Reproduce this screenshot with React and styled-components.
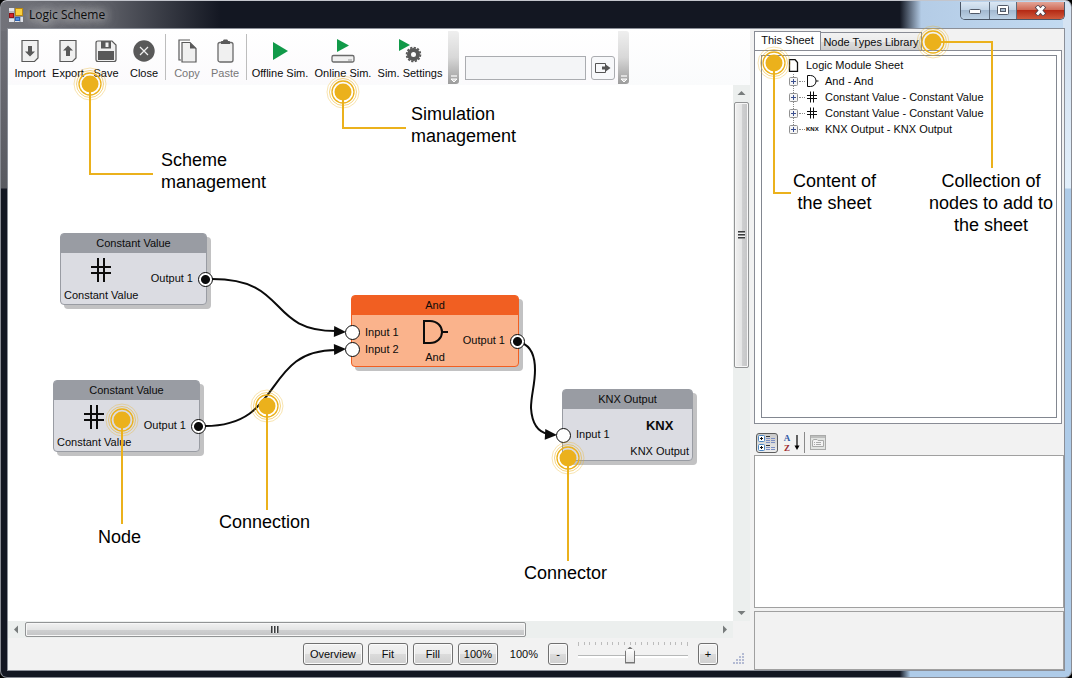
import React from "react";
import styled, { createGlobalStyle } from "styled-components";

const nodes = [
  {
    id: "const1",
    title: "Constant Value",
    icon: "hash",
    x: 52,
    y: 148,
    width: 147,
    outputs: ["Output 1"],
  },
  {
    id: "const2",
    title: "Constant Value",
    icon: "hash",
    x: 45,
    y: 295,
    width: 147,
    outputs: ["Output 1"],
  },
  {
    id: "and",
    title: "And",
    icon: "and",
    x: 343,
    y: 210,
    width: 168,
    inputs: ["Input 1", "Input 2"],
    outputs: ["Output 1"],
    active: true,
  },
  {
    id: "knx",
    title: "KNX Output",
    icon: "knx",
    x: 554,
    y: 304,
    width: 131,
    inputs: ["Input 1"],
  },
];

const wires = [
  "M204 194 C282 194 258 246 328 246",
  "M197 341 C277 341 254 265 328 265",
  "M514 258 C524 262 527 273 527 285 C527 300 523 310 523 323 C524 339 530 347 540 349",
];

const arrows = [
  { x: 338, y: 247, angle: 2 },
  { x: 338, y: 264, angle: -2 },
  { x: 549, y: 350, angle: 3 },
];

const tree = [
  { icon: "and", text: "And - And" },
  { icon: "hash", text: "Constant Value - Constant Value" },
  { icon: "hash", text: "Constant Value - Constant Value" },
  { icon: "knx", text: "KNX Output - KNX Output" },
];

const App = () => {
  return (
    <Window>
      <GlobalStyles />
      <TitleBar>
        <AppIcon />
        <Title>Logic Scheme</Title>
        <WindowButtons>
          <WindowButton $width={29} aria-label="Minimize">
            <svg width="14" height="8" viewBox="0 0 14 8">
              <rect x="1.5" y="2.5" width="11" height="4" rx="1" fill="#fff" stroke="#525a68" />
            </svg>
          </WindowButton>
          <WindowButton $width={27} aria-label="Maximize">
            <svg width="12" height="11" viewBox="0 0 12 11">
              <rect x="0.5" y="0.5" width="11" height="9" rx="1" fill="#fff" stroke="#525a68" />
              <rect x="3.5" y="3.5" width="5" height="3" fill="#a9bccf" stroke="#525a68" />
            </svg>
          </WindowButton>
          <WindowButton $width={47} $danger aria-label="Close window">
            <svg width="13" height="11" viewBox="0 0 13 11">
              <path d="M2.5 1l8 9M10.5 1l-8 9" stroke="#51424c" strokeWidth="4.6" />
              <path d="M3 1.5l7 8M10 1.5l-7 8" stroke="#fff" strokeWidth="2.8" />
            </svg>
          </WindowButton>
        </WindowButtons>
      </TitleBar>

      <Client>
        <MainColumn>
          <Toolbar />
          <Workspace>
            <Sheet />
            <Scrollbar $vertical>
              <ScrollArrow direction="up" />
              <Track $vertical>
                <Thumb $vertical $size="53%">
                  <Gripper $vertical />
                </Thumb>
              </Track>
              <ScrollArrow direction="down" />
            </Scrollbar>
          </Workspace>
          <ScrollRow>
            <Scrollbar>
              <ScrollArrow direction="left" />
              <Track>
                <Thumb $size="72.5%">
                  <Gripper />
                </Thumb>
              </Track>
              <ScrollArrow direction="right" />
            </Scrollbar>
          </ScrollRow>
          <StatusBar>
            <FlatButton $width={60}>Overview</FlatButton>
            <FlatButton $width={40}>Fit</FlatButton>
            <FlatButton $width={40}>Fill</FlatButton>
            <FlatButton $width={40}>100%</FlatButton>
            <ZoomValue htmlFor="zoom">100%</ZoomValue>
            <FlatButton $width={20} aria-label="Zoom out">
              -
            </FlatButton>
            <ZoomSlider>
              <Ticks>
                {Array.from({ length: 20 }, (_, i) => (
                  <Tick key={i} $end={i === 0 || i === 19} />
                ))}
              </Ticks>
              <Range id="zoom" type="range" min="0" max="100" defaultValue="47" />
            </ZoomSlider>
            <FlatButton $width={20} aria-label="Zoom in">
              +
            </FlatButton>
            <SizeGrip />
          </StatusBar>
        </MainColumn>
        <SidePanel />
      </Client>
    </Window>
  );
};

const Toolbar = () => (
  <ToolStrips>
    <ToolStrip>
      <ToolButton $width={38}>
        <ImportIcon />
        Import
      </ToolButton>
      <ToolButton $width={38}>
        <ImportIcon up />
        Export
      </ToolButton>
      <ToolButton $width={38}>
        <SaveIcon />
        Save
      </ToolButton>
      <ToolButton $width={38}>
        <CloseIcon />
        Close
      </ToolButton>
      <Separator />
      <ToolButton $width={38} disabled>
        <CopyIcon />
        Copy
      </ToolButton>
      <ToolButton $width={38} disabled>
        <PasteIcon />
        Paste
      </ToolButton>
      <Separator />
      <ToolButton $width={62}>
        <PlayIcon />
        Offline Sim.
      </ToolButton>
      <ToolButton $width={64}>
        <OnlineIcon />
        Online Sim.
      </ToolButton>
      <ToolButton $width={70}>
        <SimSettingsIcon />
        Sim. Settings
      </ToolButton>
      <Overflow />
    </ToolStrip>
    <ToolStrip>
      <SearchBox type="text" aria-label="Search" />
      <GoButton aria-label="Go">
        <svg width="16" height="12" viewBox="0 0 16 12">
          <path d="M10.5 3V1.5H0.5V10.5H10.5V9" fill="none" stroke="#555" />
          <path d="M7 4.5H10V2L15.5 6L10 10V7.5H7Z" fill="#555" />
        </svg>
      </GoButton>
      <Overflow />
    </ToolStrip>
  </ToolStrips>
);

const Overflow = () => (
  <OverflowButton aria-label="Toolbar options">
    <svg width="8" height="8" viewBox="0 0 8 8">
      <path d="M1 1h6" stroke="#fff" strokeWidth="1.2" />
      <path d="M1 4l3 3 3-3z" fill="#fff" fillOpacity="0.5" stroke="#fff" />
    </svg>
  </OverflowButton>
);

const Sheet = () => (
  <Canvas>
    {nodes.map((node) => (
      <LogicNode key={node.id} {...node} />
    ))}
    <Wires>
      {wires.map((d) => (
        <path key={d} d={d} fill="none" stroke="#0b0b0b" strokeWidth="2" />
      ))}
      {arrows.map(({ x, y, angle }) => (
        <path
          key={`${x}-${y}`}
          d="M0 0L-12 -5.5V5.5Z"
          transform={`translate(${x} ${y}) rotate(${angle})`}
          fill="#0b0b0b"
        />
      ))}
    </Wires>
    {nodes.map(({ id, x, y, width, inputs = [], outputs = [] }) => (
      <Connectors key={id} $x={x} $y={y} $width={width}>
        <Pins>
          {inputs.map((name) => (
            <Pin key={name} />
          ))}
        </Pins>
        <Pins>
          {outputs.map((name) => (
            <Pin key={name} $filled />
          ))}
        </Pins>
      </Connectors>
    ))}

    <Callout x={82} y={-1} line="V90H63" labelX={71} labelY={65}>
      Scheme
      <br />
      management
    </Callout>
    <Callout x={335} y={7} line="V36H63" labelX={68} labelY={11}>
      Simulation
      <br />
      management
    </Callout>
    <Callout x={114} y={335} line="V104" labelX={-24} labelY={106}>
      Node
    </Callout>
    <Callout x={259} y={321} line="V104" labelX={-48} labelY={105}>
      Connection
    </Callout>
    <Callout x={560} y={373} line="V103" labelX={-44} labelY={104}>
      Connector
    </Callout>
  </Canvas>
);

const LogicNode = ({ title, icon, x, y, width, inputs, outputs, active }) => (
  <NodeBox $x={x} $y={y} $width={width} $active={active}>
    <NodeTitle $active={active}>{title}</NodeTitle>
    <NodeBody $columns={[inputs && "1fr", "auto", outputs && "1fr"].filter(Boolean).join(" ")}>
      {inputs && (
        <Ports>
          {inputs.map((name) => (
            <li key={name}>{name}</li>
          ))}
        </Ports>
      )}
      <NodeCaption>
        <Glyph>
          <TypeIcon name={icon} />
        </Glyph>
        {title}
      </NodeCaption>
      {outputs && (
        <Ports $right>
          {outputs.map((name) => (
            <li key={name}>{name}</li>
          ))}
        </Ports>
      )}
    </NodeBody>
  </NodeBox>
);

const TypeIcon = ({ name, small }) => {
  if (name === "hash" && small) {
    return (
      <svg width="12" height="12" viewBox="0 0 12 12">
        <path d="M4.5 0.500V11.500M7.500 0.500V11.500M1 4.500H11M1 7.500H11" stroke="#0b0b0b" />
      </svg>
    );
  }
  if (name === "hash") {
    return (
      <svg width="22" height="24" viewBox="0 0 22 24">
        <path d="M8 0V24M14 0V24M1 9H21M1 15H21" stroke="#0b0b0b" strokeWidth="2" />
      </svg>
    );
  }
  if (name === "and" && small) {
    return (
      <svg width="13" height="12" viewBox="0 0 13 12">
        <path
          d="M1.500 0.500H4.500C8 0.500 10 3 10 6S8 11.500 4.500 11.500H1.500ZM10 6H12.500"
          fill="none"
          stroke="#0b0b0b"
        />
      </svg>
    );
  }
  if (name === "and") {
    return (
      <svg width="26" height="26" viewBox="0 0 26 26">
        <path
          d="M2 2H8C15 2 20 7 20 13S15 24 8 24H2ZM20 13H26"
          fill="none"
          stroke="#0b0b0b"
          strokeWidth="2"
        />
      </svg>
    );
  }
  return <KnxMark $small={small}>KNX</KnxMark>;
};

const Callout = ({ x, y, line, labelX, labelY, align, children }) => (
  <CalloutAnchor $x={x} $y={y}>
    <CalloutDrawing width="1" height="1">
      <path d={`M0 0${line}`} fill="none" stroke="#ebb11c" strokeWidth="2" />
      <circle r="8.5" fill="#ebb11c" />
      <g fill="none" stroke="#ebb11c">
        <circle r="11" strokeWidth="1.3" />
        <circle r="13.5" strokeOpacity="0.55" />
        <circle r="16" strokeOpacity="0.35" />
      </g>
    </CalloutDrawing>
    <CalloutLabel $x={labelX} $y={labelY} $align={align}>
      {children}
    </CalloutLabel>
  </CalloutAnchor>
);

const SidePanel = () => (
  <Side>
    <TabControl>
      <Tabs role="tablist">
        <Tab role="tab" aria-selected="true" $selected>
          This Sheet
        </Tab>
        <Tab role="tab" aria-selected="false">
          Node Types Library
        </Tab>
      </Tabs>
      <TabPage>
        <TreeBox>
          <TreeRoot>
            <svg width="11" height="13" viewBox="0 0 11 13">
              <path d="M1.5 0.5H7L9.5 3.5V12.5H1.5Z" fill="#fff" stroke="#111" strokeWidth="1.3" />
            </svg>
            Logic Module Sheet
          </TreeRoot>
          <TreeList>
            {tree.map(({ icon, text }, i) => (
              <TreeItem key={i} $last={i === tree.length - 1}>
                <Expander aria-label={`Expand ${text}`}>
                  <svg width="9" height="9" viewBox="0 0 9 9">
                    <rect x="0.5" y="0.5" width="8" height="8" rx="1" fill="#f5f5f5" stroke="#919191" />
                    <path d="M2 4.5H7M4.5 2V7" stroke="#3b4f8f" />
                  </svg>
                </Expander>
                <Dots />
                <TreeIcon>
                  <TypeIcon name={icon} small />
                </TreeIcon>
                {text}
              </TreeItem>
            ))}
          </TreeList>
        </TreeBox>
      </TabPage>
    </TabControl>

    <PropertyBar>
      <PropertyButton $pressed aria-label="Categorized">
        <svg width="18" height="16" viewBox="0 0 18 16">
          <g fill="#fff" stroke="#4b86c4">
            <rect x="0.5" y="0.5" width="6" height="6" rx="1" />
            <rect x="0.5" y="9.5" width="6" height="6" rx="1" />
          </g>
          <path d="M2 3.5H5M3.5 2V5M2 12.5H5M3.5 11V14" stroke="#111" />
          <path d="M8 1.5H12M8 10.5H12" stroke="#333" />
          <path
            d="M8 3.5H12M13 3.5H17M8 5.5H12M13 5.5H17M8 7.5H12M13 7.5H17M8 12.5H12M13 12.5H17M8 14.5H12M13 14.5H17"
            stroke="#7c8fc4"
          />
        </svg>
      </PropertyButton>
      <PropertyButton aria-label="Alphabetical">
        <Letters>
          <span>A</span>
          <span>Z</span>
        </Letters>
        <svg width="6" height="17" viewBox="0 0 6 17">
          <path d="M3 1V14" stroke="#000" strokeWidth="1.2" />
          <path d="M0.5 11.5H5.5L3 16Z" />
        </svg>
      </PropertyButton>
      <PropertySeparator />
      <PropertyButton disabled aria-label="Property pages">
        <svg width="16" height="15" viewBox="0 0 16 15">
          <rect x="0.5" y="0.5" width="15" height="14" fill="#e2e4e2" stroke="#a9aaa9" />
          <path d="M1 2H15" stroke="#bdbebd" strokeWidth="2" />
          <path d="M2.5 11.5V5.5L4 4.5H7L8 5.5H13.5V11.5Z" fill="#f3f3f3" stroke="#a9aaa9" />
          <path d="M4 7.5H5M6 7.5H11M4 9.5H5M6 9.5H11" stroke="#a9aaa9" />
        </svg>
      </PropertyButton>
    </PropertyBar>
    <PropertyGrid />
    <PropertyHelp />

    <Callout x={20} y={34} line="V130H17" labelX={19} labelY={107} align="center">
      Content of
      <br />
      the sheet
    </Callout>
    <Callout x={179} y={13} line="H59V126" labelX={-4} labelY={128} align="center">
      Collection of
      <br />
      nodes to add to
      <br />
      the sheet
    </Callout>
  </Side>
);

const AppIcon = () => (
  <svg width="14" height="14" viewBox="0 0 14 14">
    <rect width="14" height="14" fill="#dfe2e8" />
    <path d="M0 4H6M5.5 0V14M5.5 8.5H14M11 8.5V14M0 10H6" stroke="#8a8d96" fill="none" />
    <rect x="6.5" y="0.5" width="7" height="7" fill="#fbd13c" stroke="#b98710" />
    <rect x="0.5" y="5.5" width="4" height="4" fill="#d5262c" stroke="#8d1418" />
    <rect x="6.5" y="9.5" width="4" height="3" fill="#4e8be0" stroke="#2a5fb0" />
  </svg>
);

const ImportIcon = ({ up }) => (
  <svg width="18" height="24" viewBox="0 0 18 24">
    <path d="M1 1.500H17V19L13.500 22.500H1Z" fill="#f0f0f0" stroke="#595959" strokeWidth="1.200" />
    <path
      d={up ? "M7 17V11.500H4L9 6.500L14 11.500H11V17Z" : "M7 7V12.500H4L9 17.500L14 12.500H11V7Z"}
      fill="#595959"
    />
  </svg>
);

const SaveIcon = () => (
  <svg width="22" height="24" viewBox="0 0 22 24">
    <path
      d="M1 4Q1 2 3 2H17L21 6V20.500Q21 22.500 19 22.500H3Q1 22.500 1 20.500Z"
      fill="#f0f0f0"
      stroke="#595959"
      strokeWidth="1.200"
    />
    <path d="M6 2H16V9.500H6Z" fill="#595959" />
    <path d="M10.500 3.500H13.500V8H10.500Z" fill="#f0f0f0" />
    <path d="M3 12H19V21H3Z" fill="#595959" />
  </svg>
);

const CloseIcon = () => (
  <svg width="22" height="24" viewBox="0 0 22 24">
    <circle cx="11" cy="12" r="10.7" fill="#595959" />
    <path d="M7 8L15 16M15 8L7 16" stroke="#f0f0f0" strokeWidth="1.2" />
  </svg>
);

const CopyIcon = () => (
  <svg width="19" height="24" viewBox="0 0 19 24">
    <path d="M3 21H1V1H12" fill="none" stroke="#595959" strokeWidth="1.2" />
    <path d="M4 3.500H12L18 9.500V23H4Z" fill="#f0f0f0" stroke="#595959" strokeWidth="1.2" />
    <path d="M12 3.500L18 9.500H12Z" fill="#595959" />
  </svg>
);

const PasteIcon = () => (
  <svg width="17" height="24" viewBox="0 0 17 24">
    <rect x="1" y="3.5" width="15" height="19.5" rx="2" fill="#f0f0f0" stroke="#6a6a6a" strokeWidth="1.3" />
    <path d="M4 5V2.5Q4 2 5 2H6Q6 0.5 7 0.5H10Q11 0.5 11 2H12Q13 2 13 2.5V5Z" fill="#595959" />
  </svg>
);

const PlayIcon = () => (
  <svg width="17" height="24" viewBox="0 0 17 24">
    <path d="M1 3V21L16 12Z" fill="#119a49" />
  </svg>
);

const OnlineIcon = () => (
  <svg width="24" height="24" viewBox="0 0 24 24">
    <path d="M6 0V13L18 6.5Z" fill="#119a49" />
    <rect x="1" y="16.5" width="22" height="6.5" rx="1.5" fill="#f0f0f0" stroke="#6a6a6a" strokeWidth="1.3" />
    <path d="M17 21H21" stroke="#9a9a9a" />
  </svg>
);

const SimSettingsIcon = () => (
  <svg width="24" height="24" viewBox="0 0 24 24">
    <path d="M1 0V12L12 6Z" fill="#119a49" />
    <circle cx="15.5" cy="15.5" r="4.5" fill="none" stroke="#595959" strokeWidth="4" />
    <circle
      cx="15.5"
      cy="15.5"
      r="6.9"
      fill="none"
      stroke="#595959"
      strokeWidth="1.8"
      strokeDasharray="2.2 1.413"
    />
  </svg>
);

const arrowPaths = {
  up: "M4.5 2L8.5 6H0.5Z",
  down: "M0.5 3H8.5L4.5 7Z",
  left: "M2 4.5L6 0.5V8.5Z",
  right: "M3 0.5V8.5L7 4.5Z",
};

const ScrollArrow = ({ direction }) => (
  <ArrowButton aria-label={`Scroll ${direction}`}>
    <svg width="9" height="9" viewBox="0 0 9 9">
      <path d={arrowPaths[direction]} fill="#777c7c" />
    </svg>
  </ArrowButton>
);

const SizeGrip = () => (
  <GripSvg width="11" height="11" viewBox="0 0 11 11">
    {[0, 1, 2, 3].map((row) =>
      [0, 1, 2, 3]
        .filter((col) => col + row >= 3)
        .map((col) => (
          <rect key={`${row}-${col}`} x={col * 3} y={row * 3} width="2" height="2" fill="#b4bbd3" />
        ))
    )}
  </GripSvg>
);

const GlobalStyles = createGlobalStyle`
  *, *::before, *::after {
    box-sizing: border-box;
  }
  body {
    margin: 0;
    background: #000;
    color: #0b0b0b;
    font-family: "Liberation Sans", Arial, sans-serif;
    font-size: 11px;
    line-height: 14px;
  }
  button, input {
    margin: 0;
    padding: 0;
    color: inherit;
    font: inherit;
  }
  svg {
    display: block;
    flex-shrink: 0;
  }
  ul {
    margin: 0;
    padding: 0;
    list-style: none;
  }
`;

const Window = styled.div`
  display: flex;
  flex-direction: column;
  min-height: 100vh;
  padding: 1px 6px 6px;
  border: 1px solid #888b93;
  border-top-color: #c3c5cc;
  border-radius: 7px;
  background:
    linear-gradient(#d5e3f2, #d5e3f2 60px, #e2effb 187px, #aecbe8 188px) right / 8px 100% no-repeat,
    linear-gradient(90deg, transparent 84%, #aecbe8 85%) bottom / 100% 8px no-repeat,
    linear-gradient(90deg, transparent 84%, #b4cce6 86%, #c3dbf2) top / 100% 30px no-repeat,
    linear-gradient(90deg, #72737a 0, #5a5c64 110px, #131722 220px) top / 100% 30px no-repeat,
    linear-gradient(#72737a, #595a61 187px, #131722 188px) left / 8px 100% no-repeat,
    #131722;
`;

const TitleBar = styled.header`
  display: flex;
  align-items: center;
  gap: 6px;
  height: 26px;
  padding-left: 2px;
`;

const Title = styled.h1`
  margin: 0;
  font-family: "Open Sans", "Segoe UI", sans-serif;
  font-size: 12px;
  font-weight: 400;
  line-height: 16px;
  text-shadow: 0 0 8px #ddd, 0 0 12px #ccc, 0 0 18px #bbb;
`;

const WindowButtons = styled.div`
  display: flex;
  align-self: flex-start;
  margin-left: auto;
  border: 1px solid #4a5666;
  border-top: 0;
  border-radius: 0 0 5px 5px;
  overflow: hidden;
`;

const WindowButton = styled.button`
  display: flex;
  align-items: center;
  justify-content: center;
  width: ${({ $width }) => $width}px;
  height: 17px;
  border: 0;
  border-right: ${({ $danger }) => ($danger ? 0 : "1px solid #5d6b7c")};
  background: ${({ $danger }) =>
    $danger
      ? "linear-gradient(#e3a598, #cf6b57 45%, #b52a15 50%, #cf5a3c)"
      : "linear-gradient(#dbe7f3, #c3d5e7 45%, #a3b9d0 50%, #bdd2e6)"};
`;

const Client = styled.main`
  display: flex;
  flex: 1;
  border: 1px solid #8b8f98;
  background: #f2f2f2;
`;

const MainColumn = styled.section`
  display: flex;
  flex-direction: column;
  flex: 1;
  min-width: 0;
`;

const ToolStrips = styled.div`
  display: flex;
  align-items: flex-end;
  gap: 3px;
  height: 56px;
  padding: 1px 0 1px 3px;
  background: linear-gradient(#fff, #fafbfc);
`;

const ToolStrip = styled.div`
  display: flex;
  align-items: flex-end;
  background: linear-gradient(#fff, #fbfafc);
`;

const ToolButton = styled.button`
  display: flex;
  flex-direction: column;
  align-items: center;
  justify-content: flex-end;
  gap: 3px;
  width: ${({ $width }) => $width}px;
  height: 53px;
  padding-bottom: 4px;
  border: 0;
  background: none;
  white-space: nowrap;

  &:disabled {
    color: #777;
  }
`;

const Separator = styled.div`
  width: 1px;
  height: 46px;
  margin: 0 2px 4px;
  background: #bdbdbd;
`;

const OverflowButton = styled.button`
  display: flex;
  align-items: flex-end;
  justify-content: center;
  width: 11px;
  height: 53px;
  margin-left: 3px;
  padding-bottom: 1px;
  border: 0;
  border-radius: 0 3px 3px 0;
  background: linear-gradient(#efefef, #d8d8d8 50%, #9c9c9c);
`;

const SearchBox = styled.input`
  width: 121px;
  height: 24px;
  margin: 0 5px 4px 3px;
  padding: 0 4px;
  border: 1px solid #aaacb0;
  background: #f4f5f7;
`;

const GoButton = styled.button`
  display: flex;
  align-items: center;
  justify-content: center;
  width: 24px;
  height: 24px;
  margin-bottom: 4px;
  border: 1px solid #aaacb0;
  border-radius: 3px;
  background: #f7f8fa;
`;

const Workspace = styled.div`
  display: flex;
  flex: 1;
`;

const Canvas = styled.div`
  position: relative;
  z-index: 1;
  flex: 1;
  background: #fff;
`;

const NodeBox = styled.article`
  position: absolute;
  left: ${({ $x }) => $x}px;
  top: ${({ $y }) => $y}px;
  width: ${({ $width }) => $width}px;
  height: 72px;
  border: 1px solid ${({ $active }) => ($active ? "#f15f22" : "#999ca3")};
  border-radius: 4px;
  background: ${({ $active }) => ($active ? "#fab38c" : "#dbdce2")};
  box-shadow: 4px 4px 0 #c2c2c3;
`;

const NodeTitle = styled.h2`
  height: 19px;
  margin: 0;
  background: ${({ $active }) => ($active ? "#f15f22" : "#999ca3")};
  border-radius: 2px 2px 0 0;
  font-size: 11px;
  font-weight: 400;
  line-height: 18px;
  text-align: center;
`;

const NodeBody = styled.div`
  display: grid;
  grid-template-columns: ${({ $columns }) => $columns};
  height: 51px;
  padding: 0 3px;
`;

const Ports = styled.ul`
  align-self: center;
  padding: 0 10px;
  line-height: 17px;
  text-align: ${({ $right }) => ($right ? "right" : "left")};
  white-space: nowrap;
`;

const NodeCaption = styled.div`
  display: flex;
  flex-direction: column;
  align-items: center;
  padding-top: 4px;
`;

const Glyph = styled.div`
  display: flex;
  align-items: center;
  height: 26px;
  margin-bottom: 5px;
`;

const KnxMark = styled.span`
  width: ${({ $small }) => ($small ? "14px" : "auto")};
  font-size: ${({ $small }) => ($small ? 6 : 13)}px;
  font-weight: 700;
`;

const Wires = styled.svg`
  position: absolute;
  inset: 0;
  width: 100%;
  height: 100%;
`;

const Connectors = styled.div`
  position: absolute;
  left: ${({ $x }) => $x - 6}px;
  top: ${({ $y }) => $y + 20}px;
  display: flex;
  justify-content: space-between;
  align-items: center;
  width: ${({ $width }) => $width + 12}px;
  height: 52px;
`;

const Pins = styled.div`
  display: flex;
  flex-direction: column;
  gap: 2px;
`;

const Pin = styled.span`
  width: 15px;
  height: 15px;
  border: 1px solid #0b0b0b;
  border-radius: 50%;
  background: ${({ $filled }) =>
    $filled ? "radial-gradient(circle, #0b0b0b 4px, #fff 5px)" : "#fff"};
`;

const CalloutAnchor = styled.div`
  position: absolute;
  left: ${({ $x }) => $x}px;
  top: ${({ $y }) => $y}px;
  z-index: 2;
`;

const CalloutDrawing = styled.svg`
  overflow: visible;
`;

const CalloutLabel = styled.p`
  position: absolute;
  left: ${({ $x }) => $x}px;
  top: ${({ $y }) => $y}px;
  margin: 0;
  color: #000;
  font-size: 18px;
  line-height: 22px;
  text-align: ${({ $align }) => $align || "left"};
  white-space: nowrap;
`;

const ScrollRow = styled.div`
  display: flex;
  padding-right: 17px;
`;

const Scrollbar = styled.div`
  display: flex;
  flex-direction: ${({ $vertical }) => ($vertical ? "column" : "row")};
  flex: ${({ $vertical }) => ($vertical ? "none" : 1)};
  width: ${({ $vertical }) => ($vertical ? "17px" : "auto")};
  height: ${({ $vertical }) => ($vertical ? "auto" : "17px")};
  background: #ecefee;
`;

const ArrowButton = styled.button`
  display: flex;
  align-items: center;
  justify-content: center;
  width: 17px;
  height: 17px;
  border: 0;
  background: none;
`;

const Track = styled.div`
  display: flex;
  flex-direction: inherit;
  flex: 1;
  padding: ${({ $vertical }) => ($vertical ? "0 1px" : "1px 0")};
`;

const Thumb = styled.div`
  display: flex;
  align-items: center;
  justify-content: center;
  flex: 0 0 ${({ $size }) => $size};
  border: 1px solid #929495;
  border-radius: 2px;
  box-shadow: inset 0 0 0 1px #f7f7f7;
  background: linear-gradient(
    ${({ $vertical }) => ($vertical ? "90deg" : "180deg")},
    #f1f1f1,
    #e4e5e5 50%,
    #cfd0d1 52%,
    #c4c5c6
  );
`;

const Gripper = styled.span`
  width: ${({ $vertical }) => ($vertical ? 7 : 8)}px;
  height: ${({ $vertical }) => ($vertical ? 8 : 7)}px;
  background: repeating-linear-gradient(
    ${({ $vertical }) => ($vertical ? "180deg" : "90deg")},
    #3a3c3d 0 1px,
    #8d8f90 1px 2px,
    #f1f1f1 2px 3px
  );
`;

const StatusBar = styled.footer`
  display: flex;
  align-items: center;
  justify-content: flex-end;
  gap: 5px;
  height: 32px;
  padding-right: 6px;
`;

const FlatButton = styled.button`
  width: ${({ $width }) => $width}px;
  height: 22px;
  border: 1px solid #707070;
  border-radius: 3px;
  box-shadow: inset 0 0 0 1px #fbfbfb;
  background: linear-gradient(#f2f2f2, #ebebeb 50%, #dbdbdb 52%, #cfcfcf);
`;

const ZoomValue = styled.label`
  padding: 0 5px 0 7px;
`;

const ZoomSlider = styled.div`
  display: flex;
  flex-direction: column;
  width: 110px;
  height: 24px;
  margin: 0 5px;
`;

const Ticks = styled.div`
  display: flex;
  justify-content: space-between;
  height: 4px;
`;

const Tick = styled.span`
  width: 1px;
  height: ${({ $end }) => ($end ? 4 : 3)}px;
  background: #bcbcbc;
`;

const Range = styled.input`
  appearance: none;
  width: 100%;
  height: 18px;
  background: linear-gradient(#b6b8b8, #b6b8b8) 0 9px / 100% 1px no-repeat,
    linear-gradient(#fff, #fff) 0 10px / 100% 2px no-repeat;

  &::-webkit-slider-thumb {
    appearance: none;
    width: 10px;
    height: 17px;
    border: 0;
    clip-path: polygon(50% 0, 100% 28%, 100% 100%, 0 100%, 0 28%);
    background: linear-gradient(#fff, #e4e4e4) center / 8px 13px no-repeat, #777;
  }
`;

const GripSvg = styled.svg`
  align-self: flex-end;
  margin: 0 0 6px 10px;
`;

const Side = styled.aside`
  position: relative;
  z-index: 2;
  display: flex;
  flex-direction: column;
  flex: 0 0 310px;
  margin-left: 4px;
  padding-top: 1px;
`;

const TabControl = styled.div`
  display: flex;
  flex-direction: column;
  flex: 1;
  margin-right: 2px;
`;

const Tabs = styled.div`
  display: flex;
  align-items: flex-end;
  height: 20px;
`;

const Tab = styled.button`
  width: ${({ $selected }) => ($selected ? 67 : 101)}px;
  height: ${({ $selected }) => ($selected ? 20 : 18)}px;
  margin-bottom: ${({ $selected }) => ($selected ? "-1px" : 0)};
  padding-bottom: ${({ $selected }) => ($selected ? 4 : 0)}px;
  border: 1px solid #898c95;
  border-width: ${({ $selected }) => ($selected ? "1px 1px 0" : "1px 1px 0 0")};
  background: ${({ $selected }) =>
    $selected ? "#fff" : "linear-gradient(#f2f2f2, #ebebeb 50%, #dddddd 52%, #cdcdcd)"};
  white-space: nowrap;
`;

const TabPage = styled.div`
  display: flex;
  flex: 1;
  padding: 4px 4px 5px 6px;
  border: 1px solid #898c95;
  background: #fff;
`;

const TreeBox = styled.div`
  flex: 1;
  padding: 1px 0 0 26px;
  border: 1px solid #828790;
`;

const TreeRoot = styled.div`
  display: flex;
  align-items: center;
  gap: 7px;
  height: 16px;
`;

const TreeList = styled.ul`
  padding-left: 1px;
`;

const TreeItem = styled.li`
  display: flex;
  align-items: center;
  height: 16px;
  background: linear-gradient(#fff 50%, transparent 50%) 4px 0 / 1px 2px repeat-y,
    linear-gradient(#888, #888) 4px 0 / 1px ${({ $last }) => ($last ? "50%" : "100%")} no-repeat;
`;

const Expander = styled.button`
  width: 9px;
  height: 9px;
  border: 0;
  background: none;
`;

const Dots = styled.span`
  width: 6px;
  margin-left: 1px;
  border-top: 1px dotted #888;
`;

const TreeIcon = styled.span`
  display: flex;
  align-items: center;
  width: 20px;
  padding-left: 1px;
`;

const PropertyBar = styled.div`
  display: flex;
  align-items: center;
  gap: 2px;
  height: 31px;
  padding: 6px 2px 0;
`;

const PropertyButton = styled.button`
  display: flex;
  align-items: center;
  justify-content: center;
  gap: 2px;
  width: 22px;
  height: 20px;
  border: ${({ $pressed }) => ($pressed ? "1px solid #5d5d5d" : 0)};
  border-radius: 3px;
  background: ${({ $pressed }) => ($pressed ? "linear-gradient(#c9c9c9, #ececec)" : "none")};
`;

const Letters = styled.span`
  display: flex;
  flex-direction: column;
  width: 9px;
  font-family: "Liberation Serif", "Times New Roman", serif;
  font-size: 9px;
  font-weight: 700;
  line-height: 10px;

  span:first-child {
    color: #3159a6;
  }
  span:last-child {
    color: #9c2a2f;
  }
`;

const PropertySeparator = styled.div`
  width: 1px;
  height: 21px;
  background: #8a8a8a;
`;

const PropertyGrid = styled.div`
  height: 153px;
  border: 1px solid #a0a0a0;
  background: #fff;
`;

const PropertyHelp = styled.div`
  height: 59px;
  margin-top: 3px;
  border: 1px solid #a0a0a0;
`;

export default App;
